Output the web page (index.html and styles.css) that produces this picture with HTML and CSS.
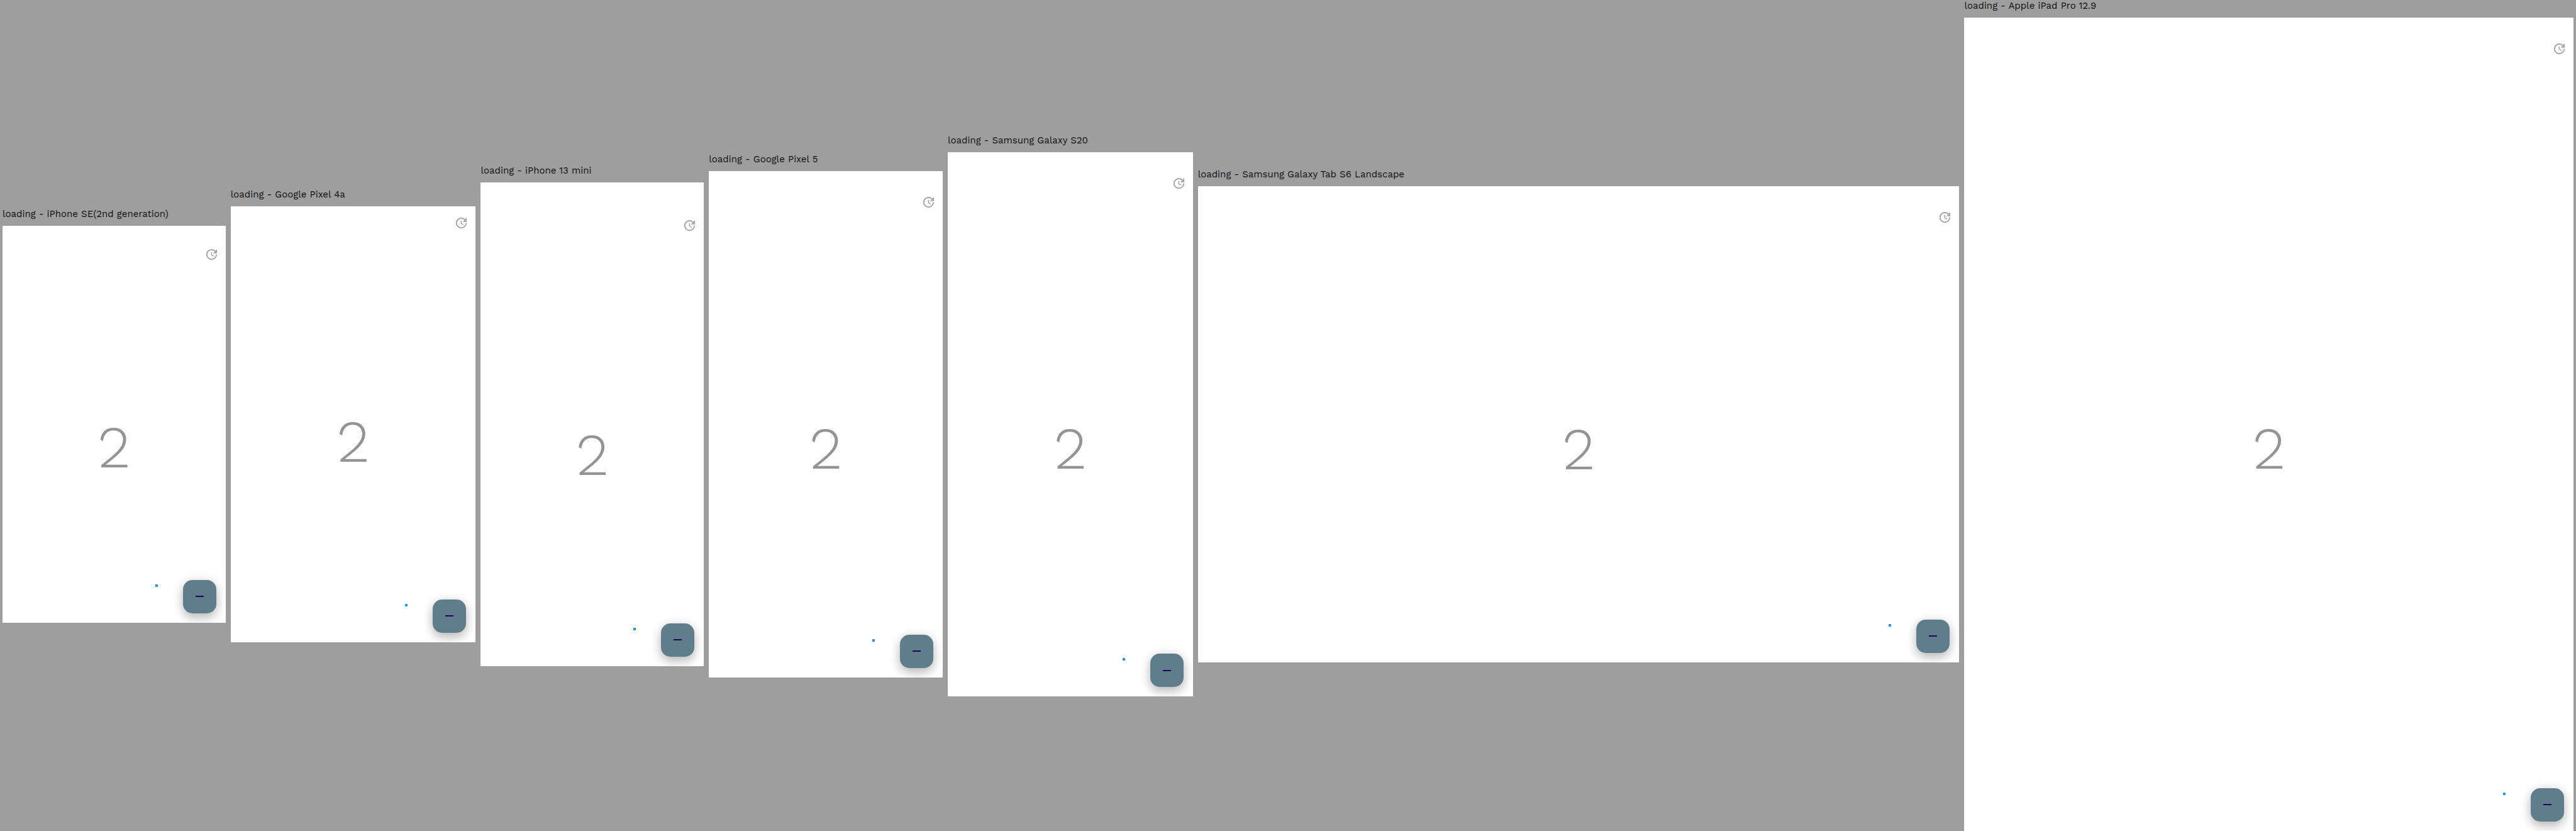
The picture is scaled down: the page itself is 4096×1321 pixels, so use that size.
FILE: index.html
```html
<!DOCTYPE html>
<html lang="en">
<head>
<meta charset="utf-8">
<title>Device previews</title>
<link rel="stylesheet" href="styles.css">
</head>
<body>
<svg class="sprite" aria-hidden="true">
  <symbol id="update" viewBox="0 0 24 24">
    <path d="M21 10.120h-6.780l2.740-2.820c-2.730-2.700-7.150-2.800-9.880-.1-2.730 2.710-2.730 7.080 0 9.790 2.730 2.710 7.150 2.710 9.880 0C18.320 15.650 19 14.080 19 12.100h2c0 1.980-.880 4.550-2.640 6.290-3.510 3.480-9.210 3.480-12.720 0-3.500-3.470-3.530-9.110-.020-12.580 3.510-3.470 9.140-3.470 12.650 0L21 3v7.120zM12.500 8v4.250l3.500 2.080-.720 1.210L11 13V8h1.500z"/>
  </symbol>
</svg>
<main class="board">
  <section class="device se">
    <h2 class="label">loading - iPhone SE(2nd generation)</h2>
    <div class="screen">
      <header class="bar"><button class="update" aria-label="Update"><svg><use href="#update"/></svg></button></header>
      <p class="count">2</p>
      <i class="dot"></i><button class="fab" aria-label="Decrease"><span class="minus"></span></button>
    </div>
  </section>
  <section class="device pixel4a">
    <h2 class="label">loading - Google Pixel 4a</h2>
    <div class="screen">
      <header class="bar"><button class="update" aria-label="Update"><svg><use href="#update"/></svg></button></header>
      <p class="count">2</p>
      <i class="dot"></i><button class="fab" aria-label="Decrease"><span class="minus"></span></button>
    </div>
  </section>
  <section class="device mini">
    <h2 class="label">loading - iPhone 13 mini</h2>
    <div class="screen">
      <header class="bar"><button class="update" aria-label="Update"><svg><use href="#update"/></svg></button></header>
      <p class="count">2</p>
      <i class="dot"></i><button class="fab" aria-label="Decrease"><span class="minus"></span></button>
    </div>
  </section>
  <section class="device pixel5">
    <h2 class="label">loading - Google Pixel 5</h2>
    <div class="screen">
      <header class="bar"><button class="update" aria-label="Update"><svg><use href="#update"/></svg></button></header>
      <p class="count">2</p>
      <i class="dot"></i><button class="fab" aria-label="Decrease"><span class="minus"></span></button>
    </div>
  </section>
  <section class="device s20">
    <h2 class="label">loading - Samsung Galaxy S20</h2>
    <div class="screen">
      <header class="bar"><button class="update" aria-label="Update"><svg><use href="#update"/></svg></button></header>
      <p class="count">2</p>
      <i class="dot"></i><button class="fab" aria-label="Decrease"><span class="minus"></span></button>
    </div>
  </section>
  <section class="device tab">
    <h2 class="label">loading - Samsung Galaxy Tab S6 Landscape</h2>
    <div class="screen">
      <header class="bar"><button class="update" aria-label="Update"><svg><use href="#update"/></svg></button></header>
      <p class="count">2</p>
      <i class="dot"></i><button class="fab" aria-label="Decrease"><span class="minus"></span></button>
    </div>
  </section>
  <section class="device ipad">
    <h2 class="label">loading - Apple iPad Pro 12.9</h2>
    <div class="screen">
      <header class="bar"><button class="update" aria-label="Update"><svg><use href="#update"/></svg></button></header>
      <p class="count">2</p>
      <i class="dot"></i><button class="fab" aria-label="Decrease"><span class="minus"></span></button>
    </div>
  </section>
</main>
</body>
</html>
```
FILE: styles.css
```css
* { box-sizing: border-box; }
body { margin: 0; background: #9e9e9e; font-family: "Work Sans", Inter, sans-serif; }
button { border: 0; padding: 0; cursor: pointer; }
.sprite { display: none; }

.board {
  display: flex;
  align-items: center;
  gap: 8px;
  min-height: 100vh;
  padding: 0 4px;
}

/* each device grows by its logical width, so all share one scale */
.device { min-width: 0; --status: 23px; }
.label {
  margin: 0 0 10px;
  font-size: 15px;
  font-weight: 400;
  line-height: 18px;
  white-space: nowrap;
  color: #111;
}
.screen {
  position: relative;
  display: flex;
  flex-direction: column;
  overflow: hidden;
  padding-top: var(--status);
  background: #fff;
}

.se { flex: 375 1 0; --status: 19px; }
.se .screen { aspect-ratio: 375 / 667; }
.pixel4a { flex: 412 1 0; --status: 0px; }
.pixel4a .screen { aspect-ratio: 412 / 732; }
.mini { flex: 375 1 0; --status: 42px; }
.mini .screen { aspect-ratio: 375 / 812; }
.pixel5 { flex: 393 1 0; }
.pixel5 .screen { aspect-ratio: 393 / 851; }
.s20 { flex: 412 1 0; }
.s20 .screen { aspect-ratio: 412 / 915; }
.tab { flex: 1280 1 0; }
.tab .screen { aspect-ratio: 1280 / 800; }
.ipad { flex: 1024 1 0; }
.ipad .screen { aspect-ratio: 1024 / 1366; }

.bar {
  display: flex;
  align-items: center;
  justify-content: flex-end;
  height: 53px;
  padding-right: 11px;
}
.update { display: flex; background: none; }
.update svg { width: 23px; height: 23px; fill: #a6a6a6; }

.count {
  display: flex;
  flex: 1;
  align-items: center;
  justify-content: center;
  margin: 0;
  padding-top: 2px;
  color: #949494;
  font-family: "Work Sans", Lato, sans-serif;
  font-size: 94px;
  font-weight: 300;
  line-height: 110px;
}

/* floating controls over the screen */
.fab {
  position: absolute;
  right: 15px;
  bottom: 15px;
  display: flex;
  align-items: center;
  justify-content: center;
  width: 53px;
  height: 53px;
  border-radius: 15px;
  background: #607d8b;
  box-shadow: 0 8px 16px rgba(0, 0, 0, .2), 0 1px 18px rgba(0, 0, 0, .12);
}
.minus { width: 13px; height: 2px; background: #21005d; }
.dot {
  position: absolute;
  right: 108px;
  bottom: 57px;
  width: 4px;
  height: 4px;
  background: #2196f3;
}
```
